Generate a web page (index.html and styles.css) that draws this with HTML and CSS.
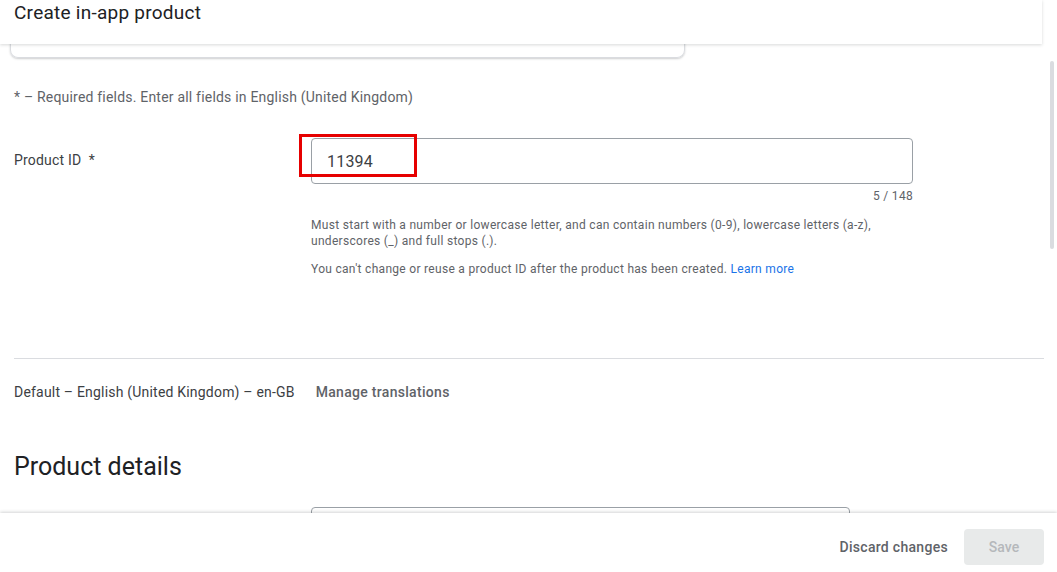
FILE: index.html
```html
<!DOCTYPE html>
<html lang="en">
<head>
<meta charset="utf-8">
<title>Create in-app product</title>
<link rel="stylesheet" href="styles.css">
</head>
<body>
<div class="app">
  <main class="content">
    <div class="peek-card"></div>
    <p class="required-note">* – Required fields. Enter all fields in English (United Kingdom)</p>

    <div class="field-row">
      <div class="field-label">Product ID&nbsp; *</div>
      <div class="field-body">
        <div class="input-wrap">
          <div class="text-input">11394</div>
          <div class="highlight"></div>
        </div>
        <div class="counter">5 / 148</div>
        <p class="help">Must start with a number or lowercase letter, and can contain numbers (0-9), lowercase letters (a-z), underscores (_) and full stops (.).</p>
        <p class="help help-second">You can't change or reuse a product ID after the product has been created. <a class="link" href="#">Learn more</a></p>
      </div>
    </div>

    <hr class="divider">

    <div class="lang-row">
      <span class="lang">Default – English (United Kingdom) – en-GB</span>
      <span class="manage">Manage translations</span>
    </div>

    <h2 class="section-title">Product details</h2>

    <div class="field-row">
      <div class="field-label"></div>
      <div class="field-body">
        <div class="text-input short"></div>
      </div>
    </div>
  </main>

  <header class="topbar">
    <h1 class="title">Create in-app product</h1>
  </header>

  <div class="scrollbar"></div>

  <footer class="bottombar">
    <button class="btn-text">Discard changes</button>
    <button class="btn-save" disabled>Save</button>
  </footer>
</div>
</body>
</html>
```

FILE: styles.css
```css
* { box-sizing: border-box; }
html, body { margin: 0; padding: 0; }
body {
  font-family: Roboto, "Liberation Sans", Arial, sans-serif;
  color: #3c4043;
  background: #fff;
}
.app {
  position: relative;
  width: 1057px;
  height: 572px;
  overflow: hidden;
}
.content {
  width: 1044px;
  padding: 0 0 0 14px;
}
.peek-card {
  margin-left: -4px;
  width: 675px;
  height: 58px;
  border: 1px solid #dadce0;
  border-top: none;
  border-radius: 0 0 8px 8px;
  box-shadow: 0 1px 2px rgba(60,64,67,0.25);
}
.required-note {
  margin: 29px 0 0;
  font-size: 14px;
  line-height: 20px;
  letter-spacing: 0.2px;
  color: #5f6368;
}
.field-row {
  display: grid;
  grid-template-columns: 297px 602px;
  margin-top: 31px;
}
.field-label {
  font-size: 14px;
  line-height: 20px;
  letter-spacing: 0.2px;
  padding-top: 12px;
  color: #3c4043;
}
.input-wrap { position: relative; }
.text-input {
  height: 46px;
  border: 1px solid #9aa0a6;
  border-radius: 4px;
  padding: 1px 15px 0;
  font-size: 16px;
  line-height: 44px;
  letter-spacing: 0.2px;
  color: #3c4043;
}
.highlight {
  position: absolute;
  left: -12px;
  top: -4px;
  width: 118px;
  height: 43px;
  border: 3px solid #e60000;
}
.counter {
  margin-top: 4px;
  text-align: right;
  font-size: 12px;
  line-height: 16px;
  letter-spacing: 0.3px;
  color: #5f6368;
}
.help {
  margin: 13px 0 0;
  font-size: 12px;
  line-height: 16px;
  letter-spacing: 0.3px;
  color: #5f6368;
  max-width: 580px;
}
.help-second { margin-top: 12px; }
.link { color: #1a73e8; text-decoration: none; }
.divider {
  margin: 81px 0 0;
  border: none;
  border-top: 1px solid #dadce0;
  width: 1030px;
}
.lang-row {
  margin-top: 23px;
  display: flex;
  gap: 21px;
  font-size: 14px;
  line-height: 20px;
}
.lang { color: #3c4043; letter-spacing: 0.2px; }
.manage { color: #5f6368; font-weight: 500; letter-spacing: 0.3px; }
.section-title {
  margin: 49px 0 0;
  font-size: 25px;
  line-height: 32px;
  font-weight: 400;
  color: #202124;
}
.section-title + .field-row { margin-top: 24px; }
.text-input.short { width: 539px; }

.topbar {
  position: absolute;
  left: 0;
  top: 0;
  width: 1042px;
  height: 44px;
  background: #fff;
  box-shadow: 0 1px 3px rgba(60,64,67,0.2);
  padding: 2px 14px 0;
}
.title {
  margin: 0;
  font-size: 19px;
  line-height: 22px;
  letter-spacing: 0.25px;
  font-weight: 400;
  color: #202124;
}
.scrollbar {
  position: absolute;
  left: 1050px;
  top: 61px;
  width: 4px;
  height: 188px;
  border-radius: 2px;
  background: #dadce0;
}
.bottombar {
  position: absolute;
  left: 0;
  top: 513px;
  width: 1057px;
  height: 59px;
  background: #fff;
  box-shadow: 0 -1px 3px rgba(60,64,67,0.22);
  display: flex;
  align-items: center;
  justify-content: flex-end;
  padding: 8px 13px 0 0;
  gap: 8px;
}
.btn-text {
  font-family: Roboto, "Liberation Sans", Arial, sans-serif;
  background: none;
  border: none;
  font-size: 14px;
  font-weight: 500;
  letter-spacing: 0.3px;
  color: #5f6368;
  padding: 0 8px;
  height: 36px;
}
.btn-save {
  font-family: Roboto, "Liberation Sans", Arial, sans-serif;
  width: 80px;
  height: 36px;
  border: none;
  border-radius: 4px;
  background: #e8eaea;
  color: #b5b8bb;
  font-size: 14px;
  font-weight: 500;
}
```
